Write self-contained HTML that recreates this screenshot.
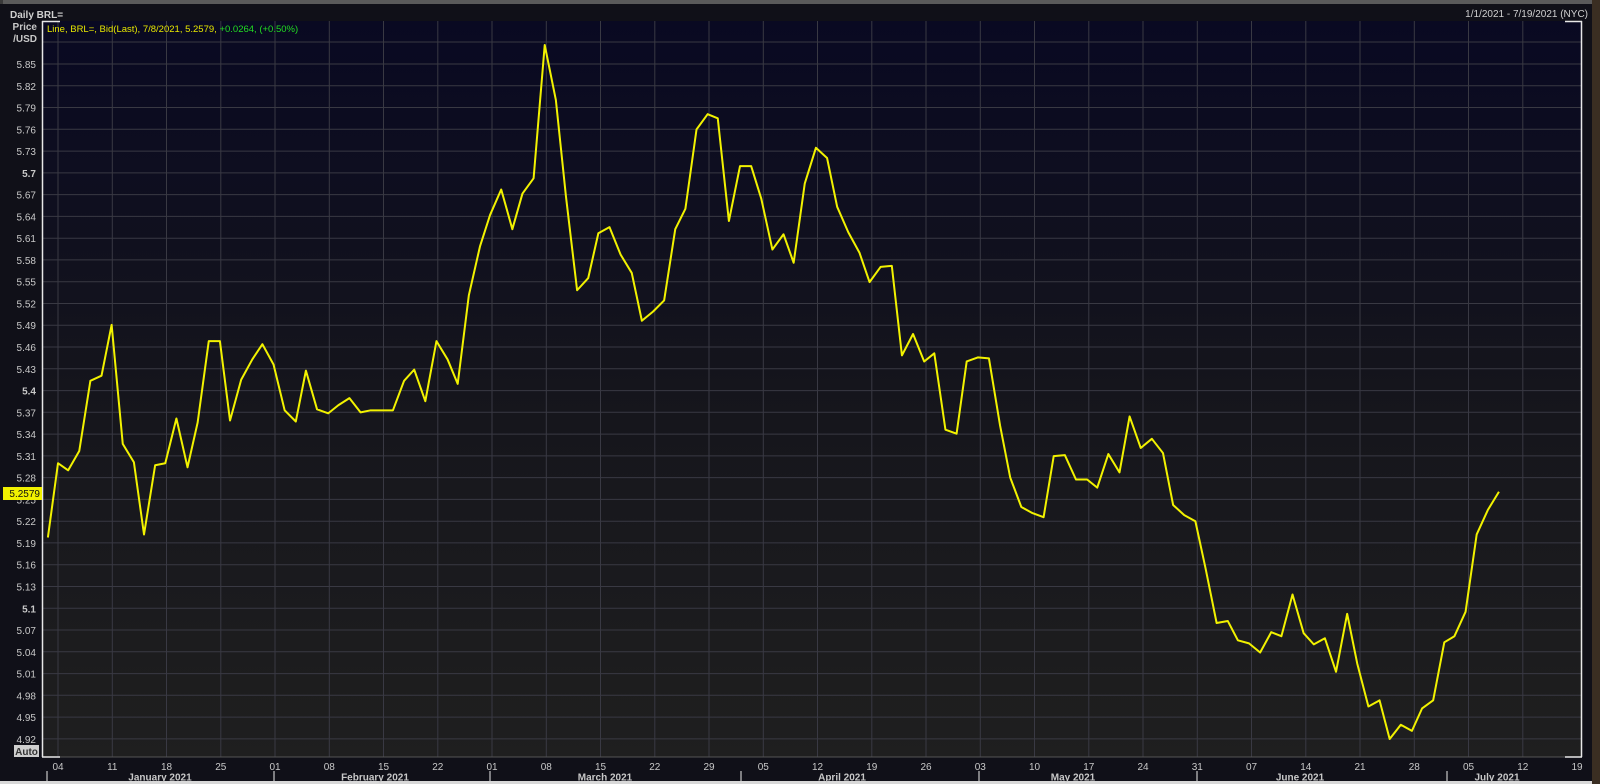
<!DOCTYPE html>
<html><head><meta charset="utf-8"><style>
html,body{margin:0;padding:0;background:#141414;}
svg{display:block;font-family:"Liberation Sans",sans-serif;}
</style></head><body>
<svg width="1600" height="784" viewBox="0 0 1600 784" xmlns="http://www.w3.org/2000/svg">
<defs>
<linearGradient id="bg" x1="0" y1="0" x2="0" y2="1">
<stop offset="0" stop-color="#090922"/>
<stop offset="0.5" stop-color="#15151c"/>
<stop offset="1" stop-color="#1f1f1f"/>
</linearGradient>
</defs>
<rect x="0" y="0" width="1600" height="784" fill="#161616"/>
<rect x="0" y="0" width="1600" height="4" fill="#5a5a5a"/>
<rect x="1592" y="0" width="8" height="784" fill="#3a2e22"/>
<rect x="0" y="0" width="3" height="784" fill="#3a3a3a"/>
<rect x="0" y="4" width="1592" height="777" fill="#101018"/>
<rect x="0" y="781" width="1592" height="3" fill="#d8d8d8"/>
<text x="10" y="18" fill="#d0d0d0" font-size="10" font-weight="bold">Daily BRL=</text>
<text x="1588" y="17" fill="#d0d0d0" font-size="10" text-anchor="end">1/1/2021 - 7/19/2021 (NYC)</text>
<rect x="42" y="21" width="1540" height="736" fill="url(#bg)"/>
<g stroke="#393943" stroke-width="1">
<line x1="42" x2="1582" y1="42" y2="42"/>
<line x1="42" x2="1582" y1="64" y2="64"/><line x1="42" x2="1582" y1="85.8" y2="85.8"/><line x1="42" x2="1582" y1="107.5" y2="107.5"/><line x1="42" x2="1582" y1="129.3" y2="129.3"/><line x1="42" x2="1582" y1="151.1" y2="151.1"/><line x1="42" x2="1582" y1="172.9" y2="172.9"/><line x1="42" x2="1582" y1="194.6" y2="194.6"/><line x1="42" x2="1582" y1="216.4" y2="216.4"/><line x1="42" x2="1582" y1="238.2" y2="238.2"/><line x1="42" x2="1582" y1="259.9" y2="259.9"/><line x1="42" x2="1582" y1="281.7" y2="281.7"/><line x1="42" x2="1582" y1="303.5" y2="303.5"/><line x1="42" x2="1582" y1="325.2" y2="325.2"/><line x1="42" x2="1582" y1="347" y2="347"/><line x1="42" x2="1582" y1="368.8" y2="368.8"/><line x1="42" x2="1582" y1="390.6" y2="390.6"/><line x1="42" x2="1582" y1="412.3" y2="412.3"/><line x1="42" x2="1582" y1="434.1" y2="434.1"/><line x1="42" x2="1582" y1="455.9" y2="455.9"/><line x1="42" x2="1582" y1="477.6" y2="477.6"/><line x1="42" x2="1582" y1="499.4" y2="499.4"/><line x1="42" x2="1582" y1="521.2" y2="521.2"/><line x1="42" x2="1582" y1="542.9" y2="542.9"/><line x1="42" x2="1582" y1="564.7" y2="564.7"/><line x1="42" x2="1582" y1="586.5" y2="586.5"/><line x1="42" x2="1582" y1="608.3" y2="608.3"/><line x1="42" x2="1582" y1="630" y2="630"/><line x1="42" x2="1582" y1="651.8" y2="651.8"/><line x1="42" x2="1582" y1="673.6" y2="673.6"/><line x1="42" x2="1582" y1="695.3" y2="695.3"/><line x1="42" x2="1582" y1="717.1" y2="717.1"/><line x1="42" x2="1582" y1="738.9" y2="738.9"/>
</g>
<g stroke="#393943" stroke-width="1">
<line y1="21" y2="757" x1="58" x2="58"/><line y1="21" y2="757" x1="112.3" x2="112.3"/><line y1="21" y2="757" x1="166.5" x2="166.5"/><line y1="21" y2="757" x1="220.8" x2="220.8"/><line y1="21" y2="757" x1="275" x2="275"/><line y1="21" y2="757" x1="329.3" x2="329.3"/><line y1="21" y2="757" x1="383.5" x2="383.5"/><line y1="21" y2="757" x1="437.8" x2="437.8"/><line y1="21" y2="757" x1="492" x2="492"/><line y1="21" y2="757" x1="546.3" x2="546.3"/><line y1="21" y2="757" x1="600.5" x2="600.5"/><line y1="21" y2="757" x1="654.8" x2="654.8"/><line y1="21" y2="757" x1="709" x2="709"/><line y1="21" y2="757" x1="763.3" x2="763.3"/><line y1="21" y2="757" x1="817.5" x2="817.5"/><line y1="21" y2="757" x1="871.8" x2="871.8"/><line y1="21" y2="757" x1="926" x2="926"/><line y1="21" y2="757" x1="980.3" x2="980.3"/><line y1="21" y2="757" x1="1034.5" x2="1034.5"/><line y1="21" y2="757" x1="1088.8" x2="1088.8"/><line y1="21" y2="757" x1="1143" x2="1143"/><line y1="21" y2="757" x1="1197.3" x2="1197.3"/><line y1="21" y2="757" x1="1251.5" x2="1251.5"/><line y1="21" y2="757" x1="1305.8" x2="1305.8"/><line y1="21" y2="757" x1="1360" x2="1360"/><line y1="21" y2="757" x1="1414.3" x2="1414.3"/><line y1="21" y2="757" x1="1468.5" x2="1468.5"/><line y1="21" y2="757" x1="1522.8" x2="1522.8"/>
</g>
<line x1="42.5" y1="21" x2="42.5" y2="757" stroke="#e8e8e8" stroke-width="1.5"/>
<line x1="42" y1="21.5" x2="60" y2="21.5" stroke="#e8e8e8" stroke-width="1.5"/>
<line x1="42" y1="757" x2="60" y2="757" stroke="#e8e8e8" stroke-width="1.5"/>
<line x1="1581.5" y1="21" x2="1581.5" y2="757" stroke="#e8e8e8" stroke-width="1.5"/>
<line x1="1565" y1="21.5" x2="1582" y2="21.5" stroke="#e8e8e8" stroke-width="1.5"/>
<line x1="1565" y1="757" x2="1582" y2="757" stroke="#e8e8e8" stroke-width="1.5"/>
<line x1="60" y1="757" x2="1565" y2="757" stroke="#555" stroke-width="1"/>
<text x="47" y="32" font-size="9.5"><tspan fill="#e6e600">Line, BRL=, Bid(Last), 7/8/2021, 5.2579, </tspan><tspan fill="#22dd22">+0.0264, (+0.50%)</tspan></text>
<g fill="#c8c8c8" font-size="10" text-anchor="end">
<text x="37" y="30" font-weight="bold">Price</text>
<text x="37" y="42" font-weight="bold">/USD</text>
<text x="36" y="68">5.85</text><text x="36" y="89.8">5.82</text><text x="36" y="111.5">5.79</text><text x="36" y="133.3">5.76</text><text x="36" y="155.1">5.73</text><text x="36" y="176.9" font-weight="bold">5.7</text><text x="36" y="198.6">5.67</text><text x="36" y="220.4">5.64</text><text x="36" y="242.2">5.61</text><text x="36" y="263.9">5.58</text><text x="36" y="285.7">5.55</text><text x="36" y="307.5">5.52</text><text x="36" y="329.2">5.49</text><text x="36" y="351">5.46</text><text x="36" y="372.8">5.43</text><text x="36" y="394.6" font-weight="bold">5.4</text><text x="36" y="416.3">5.37</text><text x="36" y="438.1">5.34</text><text x="36" y="459.9">5.31</text><text x="36" y="481.6">5.28</text><text x="36" y="503.4">5.25</text><text x="36" y="525.2">5.22</text><text x="36" y="546.9">5.19</text><text x="36" y="568.7">5.16</text><text x="36" y="590.5">5.13</text><text x="36" y="612.3" font-weight="bold">5.1</text><text x="36" y="634">5.07</text><text x="36" y="655.8">5.04</text><text x="36" y="677.6">5.01</text><text x="36" y="699.3">4.98</text><text x="36" y="721.1">4.95</text><text x="36" y="742.9">4.92</text>
</g>
<rect x="3" y="487" width="39" height="13" fill="#f0f000"/>
<text x="40" y="497" fill="#111" font-size="10" text-anchor="end">5.2579</text>
<rect x="14" y="745" width="25" height="12" fill="#cfcfcf"/>
<text x="26.5" y="755" fill="#333" font-size="10" font-weight="bold" text-anchor="middle">Auto</text>
<g fill="#c8c8c8" font-size="10" text-anchor="middle">
<text x="58" y="770">04</text><text x="112.3" y="770">11</text><text x="166.5" y="770">18</text><text x="220.8" y="770">25</text><text x="275" y="770">01</text><text x="329.3" y="770">08</text><text x="383.5" y="770">15</text><text x="437.8" y="770">22</text><text x="492" y="770">01</text><text x="546.3" y="770">08</text><text x="600.5" y="770">15</text><text x="654.8" y="770">22</text><text x="709" y="770">29</text><text x="763.3" y="770">05</text><text x="817.5" y="770">12</text><text x="871.8" y="770">19</text><text x="926" y="770">26</text><text x="980.3" y="770">03</text><text x="1034.5" y="770">10</text><text x="1088.8" y="770">17</text><text x="1143" y="770">24</text><text x="1197.3" y="770">31</text><text x="1251.5" y="770">07</text><text x="1305.8" y="770">14</text><text x="1360" y="770">21</text><text x="1414.3" y="770">28</text><text x="1468.5" y="770">05</text><text x="1522.8" y="770">12</text><text x="1577" y="770">19</text>
</g>
<g fill="#c8c8c8" font-size="10" font-weight="bold" text-anchor="middle">
<text x="160" y="780.5">January 2021</text><text x="375" y="780.5">February 2021</text><text x="605" y="780.5">March 2021</text><text x="842" y="780.5">April 2021</text><text x="1073" y="780.5">May 2021</text><text x="1300" y="780.5">June 2021</text><text x="1497" y="780.5">July 2021</text>
</g>
<g stroke="#c8c8c8" stroke-width="1.2">
<line x1="47" y1="771" x2="47" y2="781"/><line x1="274" y1="771" x2="274" y2="781"/><line x1="490" y1="771" x2="490" y2="781"/><line x1="741" y1="771" x2="741" y2="781"/><line x1="979" y1="771" x2="979" y2="781"/><line x1="1197" y1="771" x2="1197" y2="781"/><line x1="1447" y1="771" x2="1447" y2="781"/>
</g>
<g transform="matrix(1.0119,0,0,1.0176,1.334,-1.81)">
<polyline fill="none" stroke="#f2f200" stroke-width="2" vector-effect="non-scaling-stroke" stroke-linejoin="round" points="46,530 56,457 66,464 77,445 88,376 99,371 109,321 120,438 131,456 141,527 152,459 162,457 173,413 184,461 194,417 205,337 216,337 226,415 237,375 248,355 258,340 269,360 280,405 291,416 301,366 312,404 323,408 333,400 344,393 355,407 365,405 376,405 387,405 398,376 408,365 419,396 430,337 441,355 451,379 462,292 473,244 483,213 494,188 505,227 515,192 526,177 537,46 548,100 558,195 569,287 580,275 590,231 601,225 612,252 623,270 633,317 644,308 655,297 666,227 676,207 687,129 698,114 708,118 719,219 730,165 741,165 751,197 762,247 773,232 783,260 794,182 805,147 816,157 826,205 837,230 848,250 858,279 869,264 880,263 890,351 901,330 912,357 922,349 933,424 944,428 954,357 965,353 976,354 987,420 997,471 1008,500 1019,506 1030,510 1040,450 1051,449 1062,473 1073,473 1083,481 1094,448 1105,466 1115,411 1126,442 1137,433 1148,447 1158,498 1169,508 1180,514 1190,560 1201,614 1212,612 1222,631 1233,634 1244,643 1255,623 1265,627 1276,586 1287,624 1297,635 1308,629 1319,662 1330,605 1340,654 1351,696 1362,690 1372,728 1383,714 1394,720 1404,698 1415,690 1426,633 1436,627 1447,603 1458,527 1469,503 1480,485"/>
</g>
</svg>
</body></html>
